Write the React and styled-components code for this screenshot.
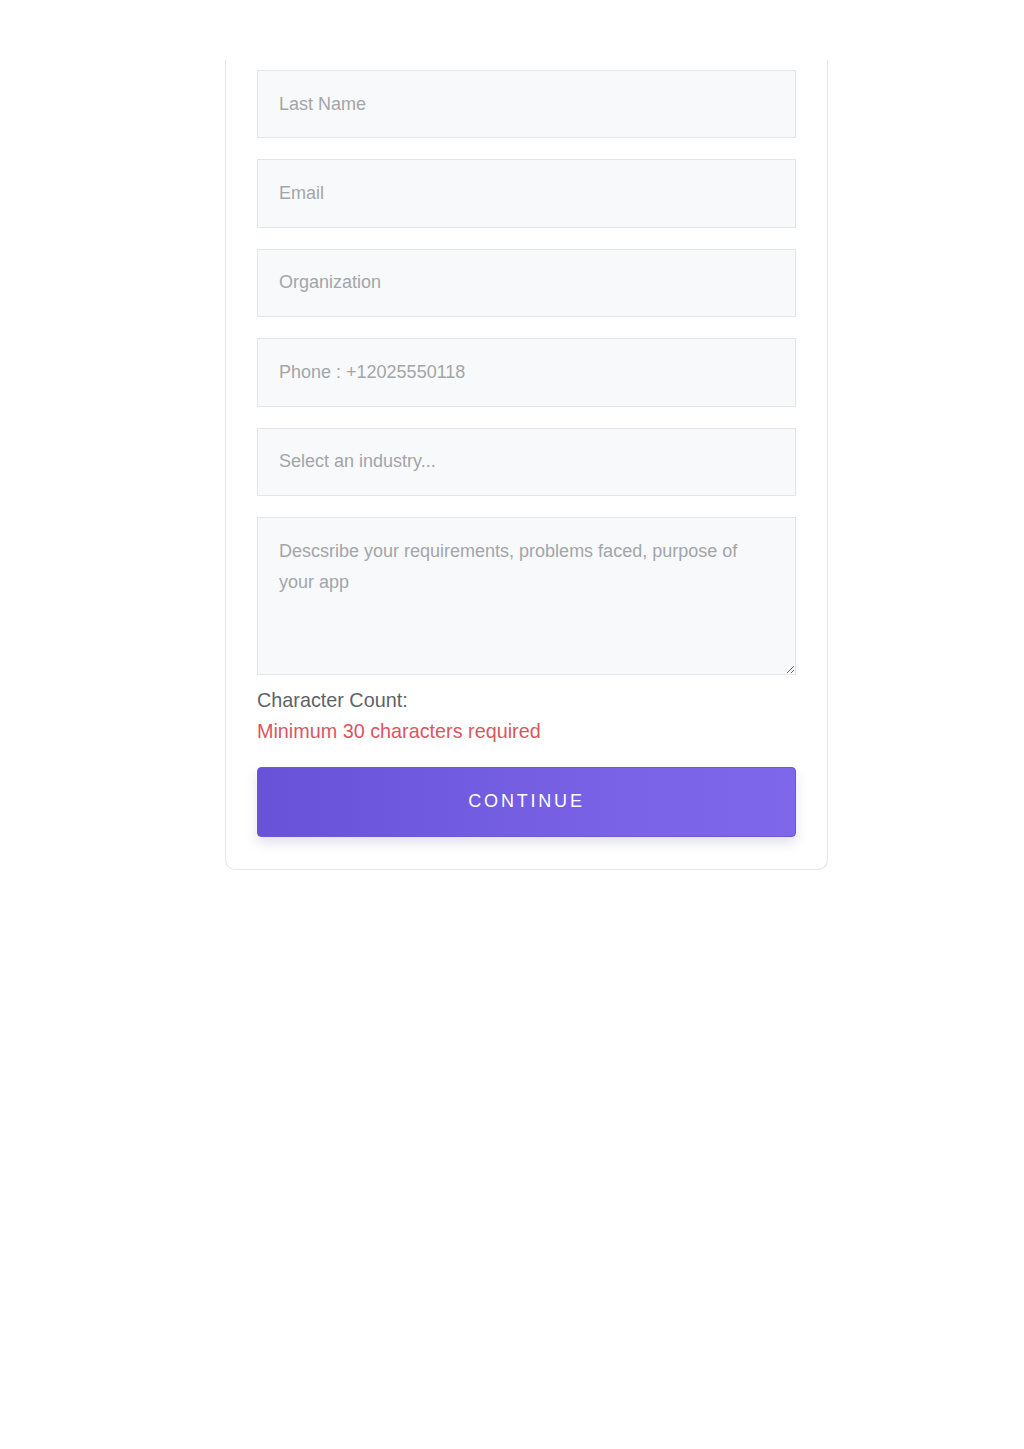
import React, { useState } from "react";
import styled, { createGlobalStyle } from "styled-components";

const GlobalStyle = createGlobalStyle`
  html, body {
    margin: 0;
    padding: 0;
    background: #ffffff;
    font-family: "Liberation Sans", Arial, sans-serif;
  }
`;

const Page = styled.div`
  min-height: 1449px;
  padding: 60px 0 0 225px;
  box-sizing: border-box;
`;

const Card = styled.div`
  width: 603px;
  box-sizing: border-box;
  padding: 10px 31px 32px;
  border: 1px solid #e6e6e9;
  border-top: none;
  border-radius: 0 0 10px 10px;
  background: #fff;
`;

const Field = styled.input`
  display: block;
  width: 100%;
  height: 68.4px;
  box-sizing: border-box;
  margin: 0 0 21px;
  padding: 0 21px;
  border: 1px solid #e3e6e9;
  background: #f8f9fb;
  font-family: inherit;
  font-size: 18px;
  color: #333;
  outline: none;

  &::placeholder {
    color: #a3a5a9;
  }
`;

const Area = styled.textarea`
  display: block;
  width: 100%;
  height: 158px;
  box-sizing: border-box;
  margin: 0;
  padding: 18px 21px;
  border: 1px solid #e3e6e9;
  background: #f8f9fb;
  font-family: inherit;
  font-size: 18px;
  line-height: 31px;
  color: #333;
  outline: none;

  &::placeholder {
    color: #a3a5a9;
  }
`;

const Count = styled.div`
  margin-top: 13px;
  font-size: 19.8px;
  line-height: 24px;
  color: #5f6368;
`;

const Error = styled.div`
  margin-top: 7px;
  font-size: 19.8px;
  line-height: 24px;
  color: #dc5562;
`;

const Button = styled.button`
  display: block;
  width: 100%;
  height: 70px;
  margin-top: 24px;
  border: 1px solid #6b57db;
  border-radius: 4px;
  background: linear-gradient(90deg, #6752d8 0%, #7a63e6 70%, #7e67ea 100%);
  box-shadow: 0 6px 12px rgba(100, 90, 160, 0.18);
  color: #fff;
  font-family: inherit;
  font-size: 18px;
  letter-spacing: 2.8px;
  cursor: pointer;
`;

export default function App() {
  const [text, setText] = useState("");
  return (
    <>
      <GlobalStyle />
      <Page>
        <Card>
          <Field placeholder="Last Name" />
          <Field placeholder="Email" />
          <Field placeholder="Organization" />
          <Field placeholder="Phone : +12025550118" />
          <Field placeholder="Select an industry..." />
          <Area
            value={text}
            onChange={(e) => setText(e.target.value)}
            placeholder="Descsribe your requirements, problems faced, purpose of your app"
          />
          <Count>Character Count: {text.length > 0 ? text.length : ""}</Count>
          <Error>Minimum 30 characters required</Error>
          <Button>CONTINUE</Button>
        </Card>
      </Page>
    </>
  );
}
